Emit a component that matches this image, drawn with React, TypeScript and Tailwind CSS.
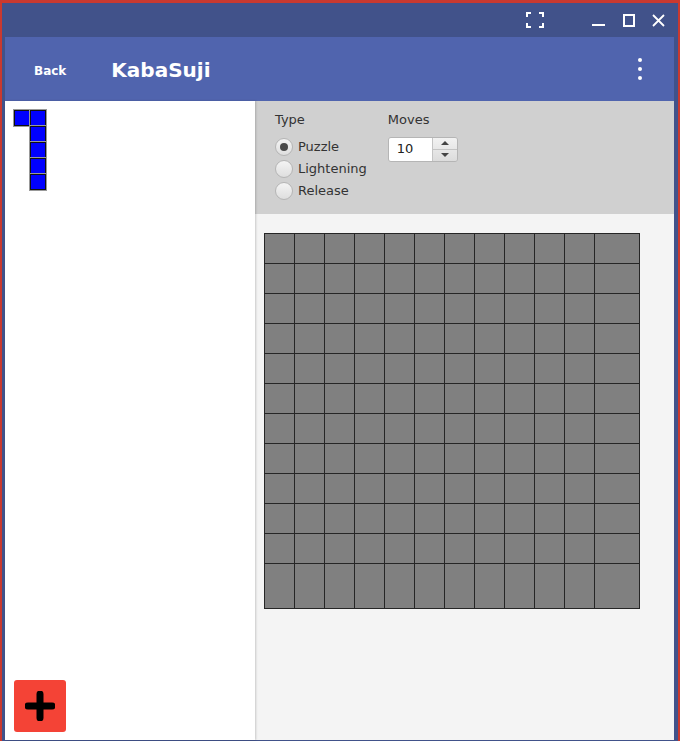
import React from 'react';

const font = { fontFamily: '"DejaVu Sans", "Liberation Sans", sans-serif' };

const GRID = 12;

const Radio = ({ label, checked }: { label: string; checked?: boolean }) => (
  <div className="flex items-center h-[22px]">
    <div className="w-[18px] h-[18px] rounded-full border border-[#b5b5b5] bg-gradient-to-b from-[#f4f4f4] to-[#dedede] flex items-center justify-center">
      {checked ? <div className="w-[8px] h-[8px] rounded-full bg-[#4a4a4a]" /> : null}
    </div>
    <span className="ml-[5px] text-[13px] text-[#333]">{label}</span>
  </div>
);

const Board = () => {
  const cells = [];
  for (let i = 0; i < GRID * GRID; i++) {
    cells.push(<div key={i} className="bg-[#808080]" />);
  }
  return (
    <div className="grid grid-cols-[repeat(11,29px)_44px] grid-rows-[repeat(11,29px)_44px] gap-px p-px bg-[#262626] w-[376px] h-[376px]">
      {cells}
    </div>
  );
};

// the L piece in the palette
const Piece = () => (
  <div className="flex">
    <div className="w-[16px] h-[16px] bg-[#0000ff] border border-[#111] shadow-[0_0_0_1px_#999]" />
    <div className="flex flex-col">
      {[0, 1, 2, 3, 4].map(i => (
        <div key={i} className="w-[16px] h-[16px] bg-[#0000ff] border border-[#111] shadow-[0_0_0_1px_#999]" />
      ))}
    </div>
  </div>
);

export default function App() {
  return (
    <div className="w-[680px] h-[741px] bg-[#c9392f] pt-[3px] px-[2px] flex flex-col" style={font}>
      <div className="flex-1 bg-[#41528a] pl-[3px] pr-[4px] pb-[1px] flex flex-col">
        {/* title bar */}
        <div className="h-[34px] flex items-center justify-end text-white">
          <svg width="18" height="16" viewBox="0 0 18 16" className="mr-[48px]" fill="none" stroke="white" strokeWidth="2">
            <path d="M1 5V1h4M13 1h4v4M17 11v4h-4M5 15H1v-4" />
          </svg>
          <svg width="14" height="14" viewBox="0 0 14 14" className="mr-[17px]" fill="none" stroke="white" strokeWidth="2">
            <path d="M0 12h13" />
          </svg>
          <svg width="12" height="13" viewBox="0 0 12 13" className="mr-[17px]" fill="none" stroke="white" strokeWidth="2">
            <rect x="1" y="1" width="10" height="11" />
          </svg>
          <svg width="13" height="13" viewBox="0 0 13 13" className="mr-[9px]" fill="none" stroke="white" strokeWidth="1.8">
            <path d="M1 1l11 11M12 1L1 12" />
          </svg>
        </div>

        {/* app bar */}
        <div className="h-[64px] bg-[#5064ae] flex items-center text-white">
          <span className="ml-[29px] mt-[3px] text-[12px] font-bold">Back</span>
          <span className="ml-[45px] mt-[1px] text-[20px] font-bold">KabaSuji</span>
          <div className="ml-auto mr-[32px] flex flex-col gap-[5px]">
            <div className="w-[4px] h-[4px] rounded-full bg-white" />
            <div className="w-[4px] h-[4px] rounded-full bg-white" />
            <div className="w-[4px] h-[4px] rounded-full bg-white" />
          </div>
        </div>

        <div className="flex-1 flex">
          {/* palette */}
          <div className="w-[250px] bg-white flex flex-col justify-between pl-[9px] pt-[9px] pb-[8px] shadow-[1px_0_2px_rgba(0,0,0,0.18)] z-10">
            <Piece />
            <button className="w-[52px] h-[52px] rounded-[3px] bg-[#f44336] flex items-center justify-center">
              <svg width="30" height="30" viewBox="0 0 30 30">
                <path d="M15 3v24M3 15h24" stroke="black" strokeWidth="7" strokeLinecap="round" />
              </svg>
            </button>
          </div>

          {/* editor */}
          <div className="flex-1 bg-[#f4f4f4] flex flex-col">
            <div className="h-[113px] bg-[#d0d0d0] flex pl-[20px] pt-[9px]">
              <div className="flex flex-col">
                <span className="text-[13px] text-[#333] mb-[6px]">Type</span>
                <Radio label="Puzzle" checked />
                <Radio label="Lightening" />
                <Radio label="Release" />
              </div>
              <div className="flex flex-col ml-[21px]">
                <span className="text-[13px] text-[#333] mb-[7px]">Moves</span>
                <div className="flex h-[25px] border border-[#b5b5b5] rounded-[3px] w-[70px] overflow-hidden">
                  <div className="w-[43px] bg-white text-[13px] text-[#222] pl-[8px] flex items-center">10</div>
                  <div className="flex-1 flex flex-col border-l border-[#c4c4c4] bg-gradient-to-b from-[#f2f2f2] to-[#dcdcdc]">
                    <div className="flex-1 flex items-center justify-center border-b border-[#c4c4c4]">
                      <div className="w-0 h-0 border-l-[4px] border-r-[4px] border-b-[4px] border-l-transparent border-r-transparent border-b-[#444]" />
                    </div>
                    <div className="flex-1 flex items-center justify-center">
                      <div className="w-0 h-0 border-l-[4px] border-r-[4px] border-t-[4px] border-l-transparent border-r-transparent border-t-[#444]" />
                    </div>
                  </div>
                </div>
              </div>
            </div>
            <div className="pl-[9px] pt-[19px]">
              <Board />
            </div>
          </div>
        </div>
      </div>
    </div>
  );
}
